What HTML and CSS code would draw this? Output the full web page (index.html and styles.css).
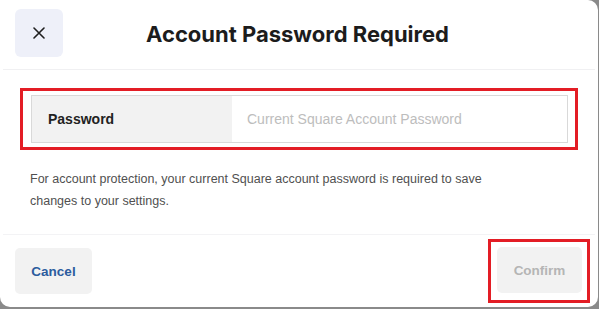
FILE: index.html
```html
<!DOCTYPE html>
<html>
<head>
<meta charset="utf-8">
<link rel="stylesheet" href="styles.css">
</head>
<body>
<div class="modal">
  <header class="head">
    <button class="close" aria-label="Close">
      <svg width="12" height="12" viewBox="0 0 12 12"><path d="M1 1L11 11M11 1L1 11" stroke="#1f1f1f" stroke-width="1.6" stroke-linecap="round"/></svg>
    </button>
    <h1 class="title">Account Password Required</h1>
  </header>
  <section class="body">
    <div class="hl-field">
      <div class="field">
        <div class="label">Password</div>
        <div class="input">Current Square Account Password</div>
      </div>
    </div>
    <p class="note">For account protection, your current Square account password is required to save changes to your settings.</p>
  </section>
  <footer class="foot">
    <button class="btn cancel">Cancel</button>
    <div class="hl-btn">
      <button class="btn confirm">Confirm</button>
    </div>
  </footer>
</div>
</body>
</html>
```

FILE: styles.css
```css
html, body { margin: 0; padding: 0; }
body {
  width: 599px;
  height: 309px;
  background: #8a8a8a;
  overflow: hidden;
  font-family: Inter, "Liberation Sans", sans-serif;
}
.modal {
  width: 598px;
  height: 307px;
  background: #fff;
  border-radius: 0 10px 10px 10px;
  display: flex;
  flex-direction: column;
}
.head {
  height: 70px;
  box-sizing: border-box;
  border-bottom: 1px solid #f0f0f2;
  margin: 0 3px;
  display: flex;
  align-items: center;
  padding-left: 12px;
}
.close {
  width: 48px;
  height: 48px;
  border: none;
  border-radius: 6px;
  background: #eef0f9;
  display: flex;
  align-items: center;
  justify-content: center;
  padding: 0;
  margin-top: -3px;
}
.title {
  flex: 1;
  margin: -1px 63px 0 0;
  text-align: center;
  font-size: 22px;
  font-weight: 700;
  color: #1c1c1c;
}
.body {
  padding: 18px 0 0 20px;
  flex: 1;
  border-bottom: 1px solid #f3f3f5;
  margin: 0 3px;
}
.hl-field {
  width: 558px;
  border: 3px solid #e31d25;
  padding: 4px 7px 4px 8px;
  box-sizing: border-box;
  margin-left: -3px;
}
.field {
  display: flex;
  height: 48px;
  border: 1px solid #d9d9d9;
  box-sizing: border-box;
}
.label {
  width: 200px;
  background: #f2f2f2;
  display: flex;
  align-items: center;
  padding-left: 16px;
  box-sizing: border-box;
  font-family: "Liberation Sans", Arial, sans-serif;
  font-size: 14px;
  font-weight: 700;
  color: #222;
}
.input {
  flex: 1;
  display: flex;
  align-items: center;
  padding-left: 15px;
  font-family: "Liberation Sans", Arial, sans-serif;
  font-size: 14px;
  color: #bdbdbd;
}
.note {
  margin: 18px 0 0 7px;
  width: 500px;
  font-family: "Liberation Sans", Arial, sans-serif;
  font-size: 12.5px;
  line-height: 22px;
  color: #505050;
}
.foot {
  height: 72px;
  display: flex;
  align-items: center;
  justify-content: space-between;
  padding: 0 8px 0 15px;
}
.btn {
  height: 46px;
  border: none;
  border-radius: 5px;
  font-family: "Liberation Sans", Arial, sans-serif;
  font-size: 13.5px;
  font-weight: 700;
  background: #f2f2f2;
}
.cancel {
  width: 77px;
  color: #2c5c9e;
}
.hl-btn {
  border: 3px solid #e31d25;
  padding: 5px 5px 7px 6px;
}
.confirm {
  width: 85px;
  color: #b5b5b5;
}
```
